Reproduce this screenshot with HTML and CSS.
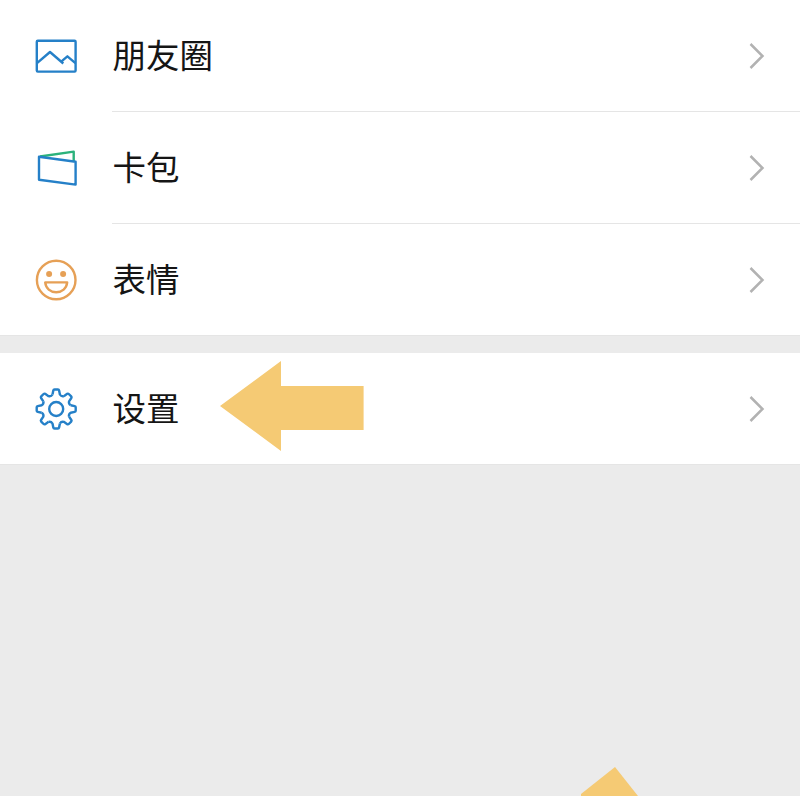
FILE: index.html
```html
<!DOCTYPE html>
<html lang="zh-CN">
<head>
<meta charset="utf-8">
<title>设置</title>
<link rel="stylesheet" href="styles.css">
</head>
<body>
<main class="screen">
  <section class="group">
    <div class="row">
      <svg class="icon blue" viewBox="0 0 44 44"><rect x="2.8" y="6.8" width="38.8" height="30.8" rx="1"/><path d="M3 29.2 16 18 29.3 29.5M27.2 27.7l6.2-5.4 8 6.8"/></svg>
      <div class="cell"><span class="label">朋友圈</span><svg class="chevron" viewBox="0 0 16 28"><path d="M1.500 2 13.500 14 1.500 26"/></svg></div>
    </div>
    <div class="row">
      <svg class="icon blue" viewBox="0 0 44 44"><path class="green" d="M6 10.5 39.7 5.6V15"/><path d="M5 10.8 41.6 15.7v22.900L5 33.700z"/></svg>
      <div class="cell"><span class="label">卡包</span><svg class="chevron" viewBox="0 0 16 28"><path d="M1.500 2 13.500 14 1.500 26"/></svg></div>
    </div>
    <div class="row">
      <svg class="icon orange" viewBox="0 0 44 44"><circle cx="22.2" cy="22" r="19.3"/><circle class="eye" cx="15.1" cy="16" r="3"/><circle class="eye" cx="29.1" cy="16" r="3"/><path d="M11.2 24.4h22c-.6 6-5.200 9.800-11 9.800s-10.400-3.800-11-9.800z"/></svg>
      <div class="cell"><span class="label">表情</span><svg class="chevron" viewBox="0 0 16 28"><path d="M1.500 2 13.500 14 1.500 26"/></svg></div>
    </div>
  </section>
  <section class="group">
    <div class="row">
      <svg class="icon blue" viewBox="-22 -22 44 44">
        <defs><path id="tooth" d="M-3.700-14.500-2.900-18.500Q-2.700-19.500-1.700-19.500H1.700Q2.700-19.500 2.900-18.500L3.700-14.500Q5.100-12.200 7.640-12.870"/></defs>
        <g transform="translate(.2 0)"><use href="#tooth"/><use href="#tooth" transform="rotate(45)"/><use href="#tooth" transform="rotate(90)"/><use href="#tooth" transform="rotate(135)"/><use href="#tooth" transform="rotate(180)"/><use href="#tooth" transform="rotate(225)"/><use href="#tooth" transform="rotate(270)"/><use href="#tooth" transform="rotate(315)"/><circle r="7"/></g>
      </svg>
      <div class="cell"><span class="label">设置</span><svg class="chevron" viewBox="0 0 16 28"><path d="M1.500 2 13.500 14 1.500 26"/></svg></div>
      <svg class="pointer" viewBox="0 0 144 90"><path d="M0 45 61 0v25h82.600v44H61v21z"/></svg>
    </div>
  </section>
  <svg class="pointer-tip" viewBox="0 0 58 29"><path d="M0 27 34 0 57 29H0z"/></svg>
</main>
</body>
</html>
```

FILE: styles.css
```css
* {
  box-sizing: border-box;
}

body {
  margin: 0;
  background: #ebebeb;
  color: #151515;
  font-family: "Noto Sans CJK SC", sans-serif;
}

.screen {
  position: relative;
  height: 796px;
  overflow: hidden;
}

.group {
  background: #fff;
  box-shadow: 0 1px 0 #e5e5e5;
  margin-bottom: 18px;
}

.row {
  position: relative;
  display: flex;
  align-items: center;
  height: 112px;
  padding-left: 34px;
}

.row:last-child {
  height: 111px;
}

.cell {
  flex: 1;
  align-self: stretch;
  display: flex;
  align-items: center;
  justify-content: space-between;
  margin-left: 34px;
  padding-right: 35px;
  border-bottom: 1px solid #e5e5e5;
}

.row:last-child .cell {
  border-bottom: 0;
}

.label {
  padding: 0 0 3px 0.5px;
  font-size: 33.5px;
  line-height: 48px;
}

.icon {
  width: 44px;
  height: 44px;
  fill: none;
  stroke-width: 2.4;
  stroke-linejoin: round;
}

.blue {
  stroke: #2580c8;
}

.green {
  stroke: #2bb27c;
}

.orange {
  stroke: #e6a056;
}

.eye {
  fill: #e6a056;
  stroke: none;
}

.chevron {
  width: 16px;
  height: 28px;
  fill: none;
  stroke: #b2b2b2;
  stroke-width: 2.5;
}

.pointer,
.pointer-tip {
  position: absolute;
  fill: #f5ca74;
}

.pointer {
  left: 220px;
  top: 8px;
  width: 144px;
  height: 90px;
}

.pointer-tip {
  left: 581px;
  bottom: 0;
  width: 58px;
  height: 29px;
}
```
